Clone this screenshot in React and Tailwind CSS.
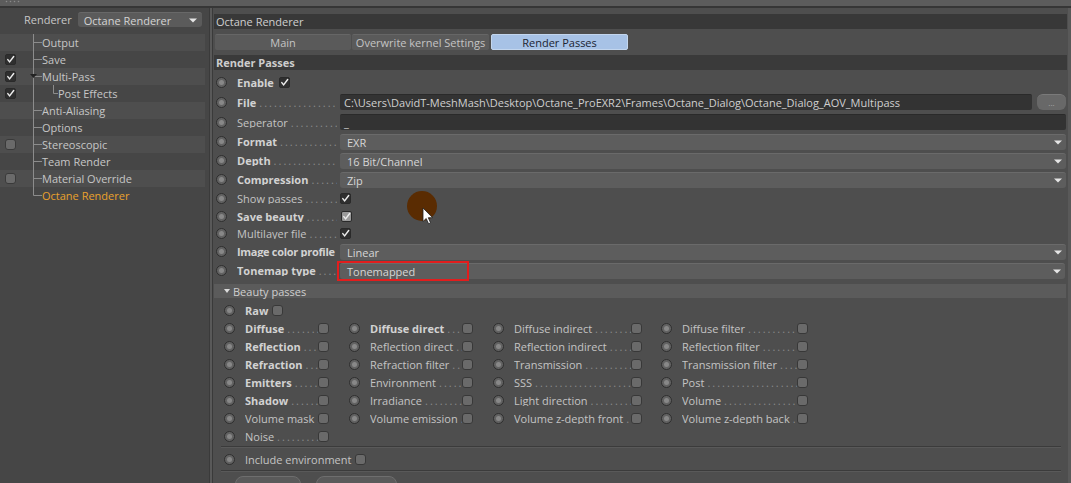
import React from 'react';

const dots = '.'.repeat(90);

function Radio() {
  return (
    <span className="flex h-[11px] w-[11px] shrink-0 items-center justify-center rounded-full border border-[#2e2e2e] bg-[#626262]">
      <span className="h-[5px] w-[5px] rounded-full bg-[#888888]" />
    </span>
  );
}

function Check({ color = '#ececec' }) {
  return (
    <svg viewBox="0 0 11 11" className="h-[11px] w-[11px]">
      <path d="M2.2 5.6 L4.4 8.4 L9.4 1.8" stroke={color} strokeWidth="1.8" fill="none" strokeLinecap="round" />
    </svg>
  );
}

function Box({ checked, light }) {
  if (checked) {
    return (
      <span
        className={
          'flex h-[11px] w-[11px] shrink-0 items-center justify-center rounded-[2px] border border-[#2a2a2a] ' +
          (light ? 'bg-[#9a9a9a]' : 'bg-[#2f2f2f]')
        }
      >
        <Check />
      </span>
    );
  }
  return <span className="block h-[11px] w-[11px] shrink-0 rounded-[3px] border border-[#383838] bg-[#6a6a6a]" />;
}

function Lead({ text, bold, tight }) {
  return (
    <span className="flex min-w-0 flex-1 items-center overflow-hidden whitespace-nowrap">
      <span className={(bold ? 'font-bold text-[#d2d2d2]' : 'text-[#c4c4c4]') + (tight ? ' tracking-[-0.3px]' : '')}>{text}</span>
      <span className="ml-[3px] min-w-0 flex-1 overflow-hidden tracking-[2px] text-[#8a8a8a]">{dots}</span>
    </span>
  );
}

function Arrow() {
  return (
    <svg viewBox="0 0 8 5" className="h-[5px] w-[8px] shrink-0">
      <path d="M0 0.5 H8 L4 4.5 Z" fill="#e6e6e6" />
    </svg>
  );
}

function Dropdown({ value }) {
  return (
    <div className="mr-[1px] flex h-[16px] flex-1 items-center rounded-[3px] border-t border-[#6a6a6a] bg-[#5d5d5d] pl-[7px] pr-[4px] text-[#d6d6d6]">
      <span className="flex-1">{value}</span>
      <Arrow />
    </div>
  );
}

function Row({ h, label, bold, tight, children }) {
  return (
    <div className={'flex items-center ' + h}>
      <span className="ml-[2px]">
        <Radio />
      </span>
      <span className="ml-[10px] flex w-[103px] pr-[3px]">
        <Lead text={label} bold={bold} tight={tight} />
      </span>
      {children}
    </div>
  );
}

const tree = [
  { t: 'Output' },
  { t: 'Save', c: 'check' },
  { t: 'Multi-Pass', c: 'check', tri: true },
  { t: 'Post Effects', c: 'check', sub: true },
  { t: 'Anti-Aliasing' },
  { t: 'Options' },
  { t: 'Stereoscopic', c: 'box' },
  { t: 'Team Render' },
  { t: 'Material Override', c: 'box' },
  { t: 'Octane Renderer', last: true },
];

const beauty = [
  [['Diffuse', 1], ['Diffuse direct', 1], ['Diffuse indirect', 0], ['Diffuse filter', 0]],
  [['Reflection', 1], ['Reflection direct', 0], ['Reflection indirect', 0], ['Reflection filter', 0]],
  [['Refraction', 1], ['Refraction filter', 0], ['Transmission', 0], ['Transmission filter', 0]],
  [['Emitters', 1], ['Environment', 0], ['SSS', 0], ['Post', 0]],
  [['Shadow', 1], ['Irradiance', 0], ['Light direction', 0], ['Volume', 0]],
  [['Volume mask', 0], ['Volume emission', 0], ['Volume z-depth front', 0], ['Volume z-depth back', 0]],
  [['Noise', 0]],
];

const colPad = ['pr-[20px]', 'pr-[20px]', 'pr-[19px]', 'pr-[3px]'];

function Divider() {
  return <div className="ml-[7px] mr-[6px] border-t border-b border-t-[#3b3b3b] border-b-[#595959]" />;
}

export default function App() {
  return (
    <div className="relative h-[483px] w-[1071px] overflow-hidden bg-[#4a4a4a] font-['Open_Sans',sans-serif] text-[11px] leading-none">
      {/* window top strip with grip */}
      <div className="flex h-[6px] items-start bg-[#5c5c5c] pl-[5px]">
        <svg viewBox="0 0 16 3" className="h-[3px] w-[16px]">
          <circle cx="1.5" cy="1.5" r="0.8" fill="#8a8a8a" />
          <circle cx="5.5" cy="1.5" r="0.8" fill="#8a8a8a" />
          <circle cx="9.5" cy="1.5" r="0.8" fill="#8a8a8a" />
          <circle cx="13.5" cy="1.5" r="0.8" fill="#8a8a8a" />
        </svg>
      </div>
      <div className="h-[2px] bg-[#363636]" />

      <div className="flex h-[475px]">
        {/* left panel */}
        <div className="w-[209px] bg-[#464646]">
          <div className="mt-[4px] flex h-[15px] items-center pl-[24px]">
            <span className="text-[#c6c6c6]">Renderer</span>
            <div className="ml-[6px] flex h-[15px] w-[124px] items-center rounded-[3px] border-t border-[#686868] bg-[#5b5b5b] pl-[6px] pr-[5px] text-[#d4d4d4]">
              <span className="flex-1">Octane Renderer</span>
              <Arrow />
            </div>
          </div>
          <div className="mt-[7px] w-[205px]">
            {tree.map((r, i) => (
              <div key={r.t} className={'flex h-[17px] items-center ' + (i % 2 === 0 ? 'bg-[#4e4e4e]' : 'bg-[#464646]')}>
                <span className="flex w-[29px] items-center pl-[5px]">
                  {r.c === 'check' && <Box checked />}
                  {r.c === 'box' && <span className="block h-[11px] w-[11px] rounded-[3px] border border-[#3a3a3a] bg-[#6a6a6a]" />}
                </span>
                <svg viewBox={r.sub ? '0 0 29 17' : '0 0 13 17'} className={r.sub ? 'h-[17px] w-[29px]' : 'h-[17px] w-[13px]'}>
                  <line x1="4.5" y1="0" x2="4.5" y2={r.last ? 8.5 : 17} stroke="#8c8c8c" strokeWidth="1" />
                  {!r.sub && <line x1="4.5" y1="8.5" x2="13" y2="8.5" stroke="#8c8c8c" strokeWidth="1" />}
                  {r.sub && <path d="M24.5 0 V8.5 H29" stroke="#8c8c8c" strokeWidth="1" fill="none" />}
                  {r.tri && <path d="M1 6 H8 L4.5 10 Z" fill="#222" />}
                </svg>
                <span className={r.last ? 'text-[#e9a12c]' : 'text-[#c6c6c6]'}>{r.t}</span>
              </div>
            ))}
          </div>
        </div>
        <div className="w-[1px] bg-[#3a3a3a]" />
        <div className="w-[2px] bg-[#595959]" />
        <div className="w-[1px] bg-[#3a3a3a]" />

        {/* right panel */}
        <div className="flex-1 border-r-[3px] border-[#595959] bg-[#4e4e4e] pl-[1px] pr-[1px] pt-[6px]">
          <div className="flex h-[15px] items-center bg-[#383838] pl-[2px] text-[#cfcfcf]">Octane Renderer</div>
          <div className="mt-[5px] flex h-[16px] pl-[1px]">
            <div className="flex w-[136px] items-center justify-center rounded-[2px] border-t border-[#666] bg-[#5a5a5a] text-[#c4c4c4]">Main</div>
            <div className="ml-[1px] flex w-[137px] items-center justify-center rounded-[2px] border-t border-[#666] bg-[#5a5a5a] text-[#c4c4c4]">
              Overwrite kernel Settings
            </div>
            <div className="ml-[2px] flex w-[137px] items-center justify-center rounded-[2px] border border-[#c3d6ee] bg-[#a7c2e6] text-[#1b2431]">
              Render Passes
            </div>
          </div>
          <div className="mt-[5px] flex h-[15px] items-center bg-[#3a3a3a] pl-[2px] font-bold text-[#cdcdcd]">Render Passes</div>

          <div className="mt-[2px]">
            <div className="flex h-[20px] items-center">
              <span className="ml-[2px]">
                <Radio />
              </span>
              <span className="ml-[10px] font-bold text-[#d2d2d2]">Enable</span>
              <span className="ml-[5px]">
                <Box checked />
              </span>
            </div>
            <Row h="h-[20px]" label="File" bold>
              <div className="flex h-[16px] flex-1 items-center overflow-hidden whitespace-nowrap rounded-[2px] border-t border-[#2a2a2a] bg-[#333333] pl-[4px] text-[#cfcfcf]">
                C:\Users\DavidT-MeshMash\Desktop\Octane_ProEXR2\Frames\Octane_Dialog\Octane_Dialog_AOV_Multipass
              </div>
              <div className="ml-[5px] mr-[1px] flex h-[16px] w-[29px] items-end justify-center rounded-[6px] border-t border-[#7a7a7a] bg-[#686868] pb-[3px] text-[8px] text-[#a8a8a8]">
                ...
              </div>
            </Row>
            <Row h="h-[20px]" label="Seperator">
              <div className="mr-[1px] flex h-[16px] flex-1 items-end rounded-[2px] border-t border-[#2a2a2a] bg-[#333333] pb-[2px] pl-[4px] text-[#cfcfcf]">
                _
              </div>
            </Row>
            <Row h="h-[19px]" label="Format" bold>
              <Dropdown value="EXR" />
            </Row>
            <Row h="h-[19px]" label="Depth" bold>
              <Dropdown value="16 Bit/Channel" />
            </Row>
            <Row h="h-[19px]" label="Compression" bold>
              <Dropdown value="Zip" />
            </Row>
            <Row h="h-[18px]" label="Show passes">
              <Box checked />
            </Row>
            <Row h="h-[18px]" label="Save beauty" bold>
              <span className="ml-[1px]">
                <Box checked light />
              </span>
            </Row>
            <Row h="h-[17px]" label="Multilayer file">
              <Box checked />
            </Row>
            <Row h="h-[19px]" label="Image color profile" bold tight>
              <Dropdown value="Linear" />
            </Row>
            <Row h="h-[19px]" label="Tonemap type" bold>
              <div className="relative mr-[1px] flex flex-1">
                <Dropdown value="Tonemapped" />
                <span className="absolute -left-[3px] -top-[2px] h-[20px] w-[132px] border-2 border-[#e21d1d]" />
              </div>
            </Row>
          </div>

          {/* beauty passes */}
          <div className="mr-[1px] mt-[4px] flex h-[14px] items-center bg-[#5b5b5b] pl-[10px] text-[#cfcfcf]">
            <svg viewBox="0 0 6 4" className="mr-[3px] h-[4px] w-[6px]">
              <path d="M0 0 H6 L3 4 Z" fill="#dcdcdc" />
            </svg>
            Beauty passes
          </div>
          <div className="mt-[3px] pl-[10px]">
            <div className="flex h-[18px] items-center">
              <Radio />
              <span className="ml-[10px] font-bold text-[#d2d2d2]">Raw</span>
              <span className="ml-[4px]">
                <Box />
              </span>
            </div>
            {beauty.map((row, i) => (
              <div key={i} className="grid h-[18px] grid-cols-[125px_144px_168px_150px] items-center">
                {row.map(([t, b], j) => (
                  <div key={t} className={'flex items-center ' + colPad[j]}>
                    <Radio />
                    <span className="ml-[10px] flex min-w-0 flex-1">
                      <Lead text={t} bold={!!b} />
                    </span>
                    <Box />
                  </div>
                ))}
              </div>
            ))}
          </div>
          <div className="mt-[1px]">
            <Divider />
          </div>
          <div className="flex h-[22px] items-center pl-[10px]">
            <Radio />
            <span className="ml-[10px] text-[#c4c4c4]">Include environment</span>
            <span className="ml-[4px]">
              <Box />
            </span>
          </div>
          <Divider />
          <div className="mt-[4px] flex pl-[21px]">
            <div className="h-[20px] w-[66px] rounded-[8px] border border-[#6e6e6e] bg-[#5a5a5a]" />
            <div className="ml-[15px] h-[20px] w-[81px] rounded-[8px] border border-[#6e6e6e] bg-[#5a5a5a]" />
          </div>
        </div>
      </div>

      {/* cursor highlight overlay */}
      <span className="absolute left-[407px] top-[191px] h-[30px] w-[30px] rounded-full bg-[#5a2c02] blur-[0.5px]" />
      <svg viewBox="0 0 12 18" className="absolute left-[422px] top-[207px] h-[18px] w-[12px]">
        <path d="M1 1 L1 14.5 L4.2 11.5 L6.6 16.8 L8.6 15.9 L6.3 10.7 L10.6 10.7 Z" fill="#ffffff" stroke="#222" strokeWidth="0.8" />
      </svg>
    </div>
  );
}
